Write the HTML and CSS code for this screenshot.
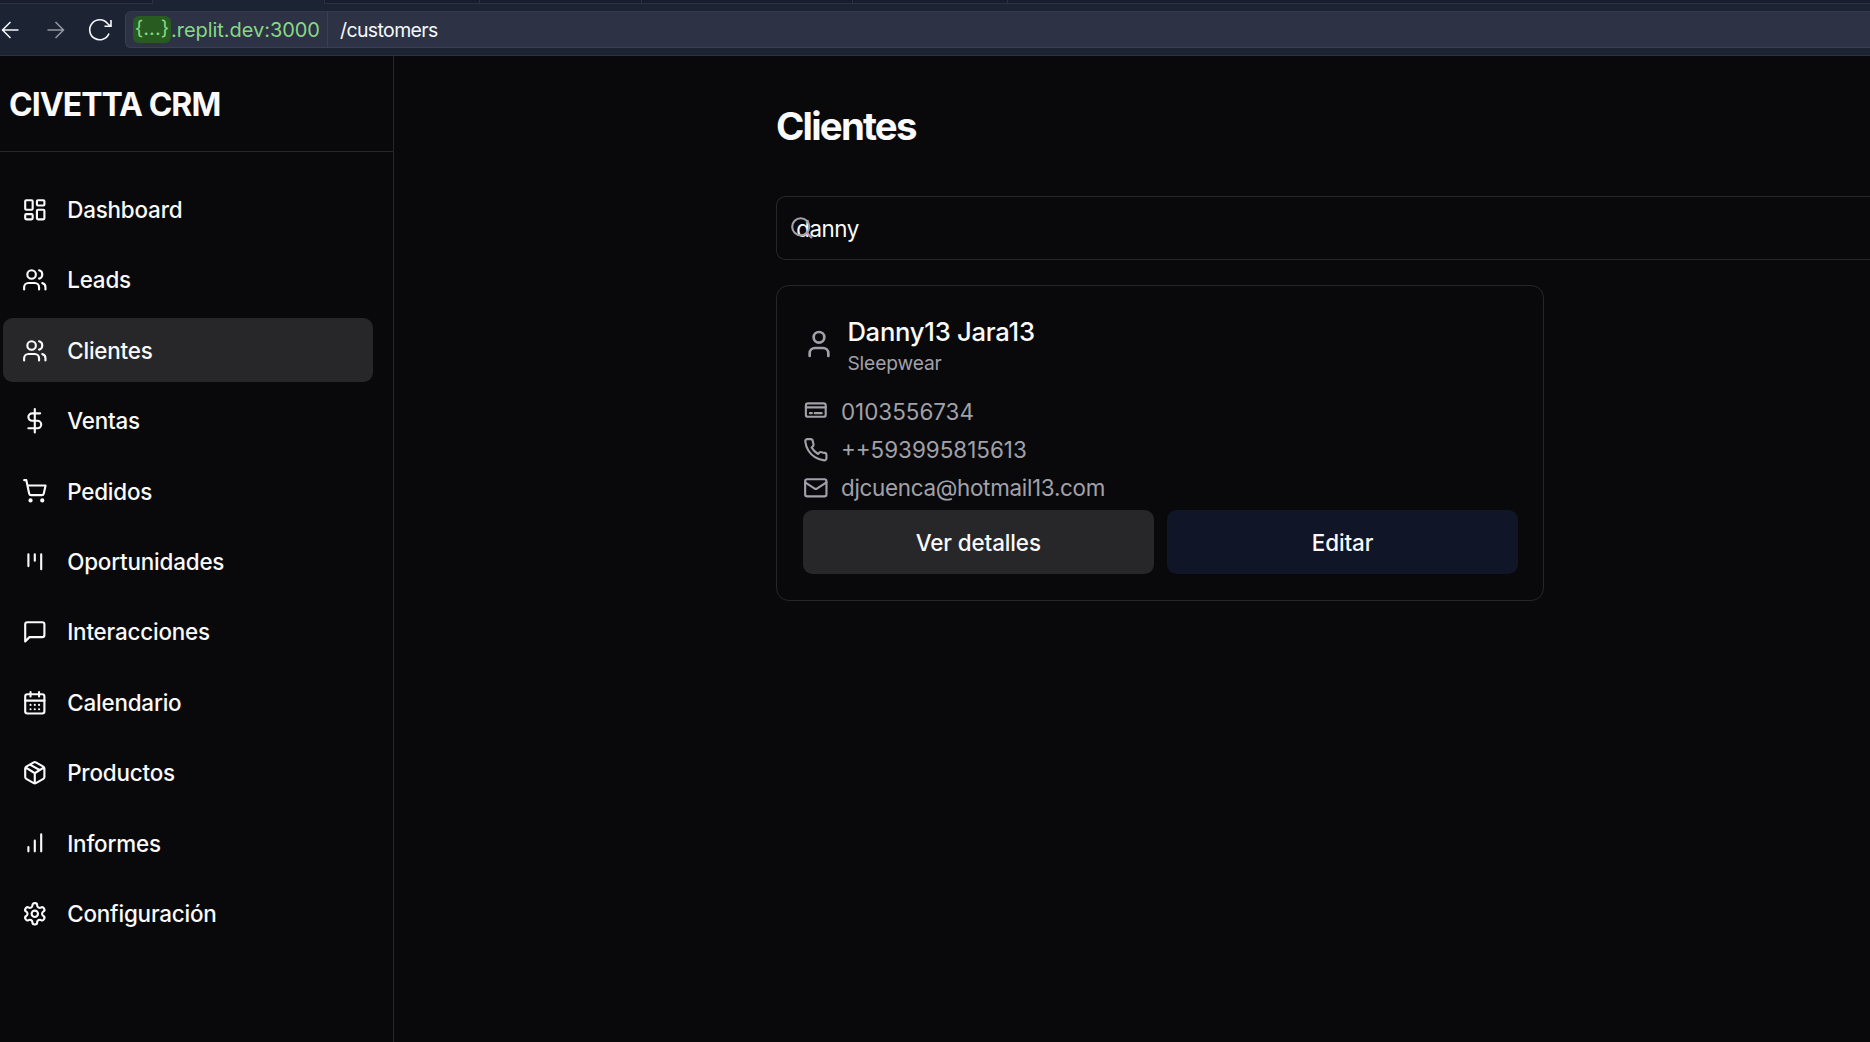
FILE: index.html
```html
<!DOCTYPE html>
<html lang="es">
<head>
<meta charset="utf-8">
<title>Civetta CRM</title>
<link rel="stylesheet" href="styles.css">
</head>
<body>
<div class="browser">
  <div class="tabs"><span class="tab t1"></span><span class="tab active"></span><span class="tab t3"></span><span class="tab t4"></span><span class="tab t5"></span><span class="tab t6"></span><span class="tab rest"></span></div>
  <div class="toolbar">
    <svg class="nav-arrow back" viewBox="0 0 18 18"><path d="M17.5 9H1.5M9.500 1 1.500 9l8 8"/></svg>
    <svg class="nav-arrow forward" viewBox="0 0 18 18"><path d="M.5 9h16M8.500 1l8 8-8 8"/></svg>
    <svg class="reload" viewBox="0 0 24 24"><path d="M21 15.500A10 10 0 1 1 19.500 5.500L22.300 8M23 2V8.300H16.500"/></svg>
    <div class="address">
      <div class="host"><span class="badge">{...}</span><span class="domain">.replit.dev:3000</span></div>
      <span class="path">/customers</span>
    </div>
  </div>
</div>
<div class="app">
  <aside class="sidebar">
    <div class="brand"><span class="brand-name">CIVETTA CRM</span></div>
    <nav class="menu">
      <a class="item"><svg class="icon" viewBox="0 0 24 24"><rect width="7" height="9" x="3" y="3" rx="1"/><rect width="7" height="5" x="14" y="3" rx="1"/><rect width="7" height="9" x="14" y="12" rx="1"/><rect width="7" height="5" x="3" y="16" rx="1"/></svg><span>Dashboard</span></a>
      <a class="item"><svg class="icon" viewBox="0 0 24 24"><path d="M16 21v-2a4 4 0 0 0-4-4H6a4 4 0 0 0-4 4v2"/><circle cx="9" cy="7" r="4"/><path d="M22 21v-2a4 4 0 0 0-3-3.870M16 3.130a4 4 0 0 1 0 7.750"/></svg><span>Leads</span></a>
      <a class="item current"><svg class="icon" viewBox="0 0 24 24"><path d="M16 21v-2a4 4 0 0 0-4-4H6a4 4 0 0 0-4 4v2"/><circle cx="9" cy="7" r="4"/><path d="M22 21v-2a4 4 0 0 0-3-3.870M16 3.130a4 4 0 0 1 0 7.750"/></svg><span>Clientes</span></a>
      <a class="item"><svg class="icon" viewBox="0 0 24 24"><path d="M12 1v22M17 5H9.500a3.500 3.500 0 0 0 0 7h5a3.500 3.500 0 0 1 0 7H6"/></svg><span>Ventas</span></a>
      <a class="item"><svg class="icon" viewBox="0 0 24 24"><circle cx="8" cy="21" r="1"/><circle cx="19" cy="21" r="1"/><path d="M2.050 2.050h2l2.660 12.420a2 2 0 0 0 2 1.580h9.780a2 2 0 0 0 1.950-1.570l1.650-7.430H5.120"/></svg><span>Pedidos</span></a>
      <a class="item"><svg class="icon" viewBox="0 0 24 24"><path d="M6 5v11M12 5v6M18 5v14"/></svg><span>Oportunidades</span></a>
      <a class="item"><svg class="icon" viewBox="0 0 24 24"><path d="M21 15a2 2 0 0 1-2 2H7l-4 4V5a2 2 0 0 1 2-2h14a2 2 0 0 1 2 2z"/></svg><span>Interacciones</span></a>
      <a class="item"><svg class="icon" viewBox="0 0 24 24"><rect width="18" height="18" x="3" y="4" rx="2"/><path d="M16 2v4M3 10h18M8 2v4M8 14h.010M12 14h.010M16 14h.010M8 18h.010M12 18h.010M16 18h.010"/></svg><span>Calendario</span></a>
      <a class="item"><svg class="icon" viewBox="0 0 24 24"><path d="M11 21.730a2 2 0 0 0 2 0l7-4A2 2 0 0 0 21 16V8a2 2 0 0 0-1-1.730l-7-4a2 2 0 0 0-2 0l-7 4A2 2 0 0 0 3 8v8a2 2 0 0 0 1 1.730zM12 22V12M3.300 7l7.703 4.734a2 2 0 0 0 1.994 0L20.700 7M7.500 4.270l9 5.150"/></svg><span>Productos</span></a>
      <a class="item"><svg class="icon" viewBox="0 0 24 24"><path d="M12 20V10M18 20V4M6 20v-4"/></svg><span>Informes</span></a>
      <a class="item"><svg class="icon" viewBox="0 0 24 24"><path d="M12.220 2h-.440a2 2 0 0 0-2 2v.180a2 2 0 0 1-1 1.730l-.430.250a2 2 0 0 1-2 0l-.150-.080a2 2 0 0 0-2.730.730l-.220.380a2 2 0 0 0 .730 2.730l.150.100a2 2 0 0 1 1 1.720v.510a2 2 0 0 1-1 1.740l-.150.090a2 2 0 0 0-.730 2.730l.220.380a2 2 0 0 0 2.730.730l.150-.080a2 2 0 0 1 2 0l.430.250a2 2 0 0 1 1 1.730V20a2 2 0 0 0 2 2h.440a2 2 0 0 0 2-2v-.180a2 2 0 0 1 1-1.730l.430-.250a2 2 0 0 1 2 0l.150.080a2 2 0 0 0 2.730-.730l.220-.390a2 2 0 0 0-.730-2.730l-.150-.080a2 2 0 0 1-1-1.740v-.500a2 2 0 0 1 1-1.740l.150-.090a2 2 0 0 0 .730-2.730l-.220-.380a2 2 0 0 0-2.730-.730l-.150.080a2 2 0 0 1-2 0l-.430-.250a2 2 0 0 1-1-1.730V4a2 2 0 0 0-2-2z"/><circle cx="12" cy="12" r="3"/></svg><span>Configuración</span></a>
    </nav>
  </aside>
  <main class="content">
    <h1 class="title">Clientes</h1>
    <div class="search">
      <svg class="icon search-icon" viewBox="0 0 24 24"><circle cx="11" cy="11" r="8"/><path d="m21 21-4.300-4.300"/></svg>
      <span class="query">danny</span>
    </div>
    <article class="card">
      <header class="customer">
        <svg class="icon avatar" viewBox="0 0 24 24"><path d="M19 21v-2a4 4 0 0 0-4-4H9a4 4 0 0 0-4 4v2"/><circle cx="12" cy="7" r="4"/></svg>
        <div class="who"><span class="name">Danny13 Jara13</span><span class="brand-tag">Sleepwear</span></div>
      </header>
      <div class="facts">
        <div class="fact id"><svg class="icon" viewBox="0 0 24 24"><rect width="18.600" height="12.600" x="2.700" y="5" rx="2"/><path d="M2.700 8.800h18.600M6.500 14.200h1.800M11 14.200h6.500"/></svg><span>0103556734</span></div>
        <div class="fact phone"><svg class="icon" viewBox="0 0 24 24"><path d="M22 16.920v3a2 2 0 0 1-2.180 2 19.790 19.790 0 0 1-8.630-3.070 19.500 19.500 0 0 1-6-6 19.790 19.790 0 0 1-3.070-8.670A2 2 0 0 1 4.110 2h3a2 2 0 0 1 2 1.720 12.840 12.840 0 0 0 .700 2.810 2 2 0 0 1-.450 2.110L8.090 9.910a16 16 0 0 0 6 6l1.270-1.270a2 2 0 0 1 2.110-.450 12.840 12.840 0 0 0 2.810.700A2 2 0 0 1 22 16.920z"/></svg><span>++593995815613</span></div>
        <div class="fact mail"><svg class="icon" viewBox="0 0 24 24"><rect width="20" height="16" x="2" y="4" rx="2"/><path d="m22 7-8.970 5.700a1.940 1.940 0 0 1-2.060 0L2 7"/></svg><span>djcuenca@hotmail13.com</span></div>
      </div>
      <div class="actions"><button class="button secondary">Ver detalles</button><button class="button primary">Editar</button></div>
    </article>
  </main>
</div>
</body>
</html>
```

FILE: styles.css
```css
* { box-sizing: border-box; }
html, body { height: 100%; }
body {
  margin: 0;
  overflow: hidden;
  display: flex;
  flex-direction: column;
  background: #09090b;
  color: #fafafa;
  font-family: Inter, "Liberation Sans", sans-serif;
  font-size: 22.4px;
}

/* Browser chrome */
.browser { flex: none; height: 56px; background: #1c2333; border-bottom: 1px solid #2b3245; }
.tabs { display: flex; height: 4px; }
.tab { background: #171d2b; border-right: 1px solid #2b3245; border-bottom: 1px solid #2b3245; }
.tab.active { width: 172px; background: #1c2333; border-bottom: 0; }
.t1 { width: 153px; }
.t3 { width: 155px; }
.t4 { width: 162px; }
.t5 { width: 211px; }
.t6 { width: 155px; }
.rest { flex: 1; border-right: 0; }
.toolbar { display: flex; align-items: center; height: 51px; }
.nav-arrow { flex: none; width: 18px; height: 18px; fill: none; stroke: #f5f9fc; stroke-width: 1.5; }
.back { margin-left: 1px; }
.forward { margin-left: 28px; opacity: .55; }
.reload { flex: none; width: 24px; height: 24px; margin-left: 23px; fill: none; stroke: #f5f9fc; stroke-width: 1.6; }
.address {
  flex: 1;
  display: flex;
  align-items: center;
  height: 37px;
  margin-left: 13px;
  background: #2e3245;
  border: 1px solid #3a3f54;
  border-top-color: #34384c;
  border-right: 0;
  border-radius: 6px 0 0 6px;
  font-size: 20px;
}
.host { display: flex; align-items: center; height: 100%; width: 202px; padding-left: 7px; border-right: 1px solid #3a3f54; color: #86d984; }
.badge { width: 38px; height: 27px; line-height: 25px; text-align: center; background: #285b20; border-radius: 6px; }
.domain { letter-spacing: -.040px; }
.path { margin-left: 12px; font-size: 19.500px; letter-spacing: -.620px; color: #f5f9fc; }

/* Layout */
.app { flex: 1; display: flex; min-height: 0; }
.sidebar { flex: none; width: 394px; border-right: 1px solid #27272a; }
.brand { display: flex; align-items: center; height: 96px; padding: 1px 0 0 9px; border-bottom: 1px solid #27272a; }
.brand-name { font-size: 32px; font-weight: 700; letter-spacing: -.960px; }

.icon { flex: none; width: 25.600px; height: 25.600px; fill: none; stroke: currentColor; stroke-width: 2; stroke-linecap: round; stroke-linejoin: round; }
.menu { display: flex; flex-direction: column; gap: 6.400px; padding: 25.600px 20px 0 3px; }
.item { display: flex; align-items: center; gap: 19.600px; height: 64px; padding-left: 19px; border-radius: 9.600px; font-weight: 500; letter-spacing: -.180px; }
.item.current { background: #27272a; }

.content { flex: 1; min-width: 0; padding: 44px 0 0 382px; }
.title { margin: 0; height: 52px; line-height: 53px; font-size: 38.400px; font-weight: 700; letter-spacing: -1.800px; }
.search { position: relative; display: flex; align-items: center; height: 64px; margin-top: 44px; padding-left: 19.200px; border: 1px solid #27272a; border-right: 0; border-radius: 9.600px 0 0 9.600px; }
.search-icon { position: absolute; left: 12px; top: 18px; color: #a1a1aa; }
.query { letter-spacing: -.450px; }

/* Customer card */
.card { width: 768px; height: 316px; margin-top: 25px; padding: 25.600px 24.800px 25.600px 25.600px; border: 1px solid #27272a; border-radius: 12.800px; }
.customer { display: flex; align-items: center; gap: 12.800px; height: 64px; }
.avatar { width: 32px; height: 32px; color: #a1a1aa; }
.who { display: flex; flex-direction: column; padding-top: 2px; }
.name { line-height: 38px; font-size: 25.600px; font-weight: 500; letter-spacing: -.250px; }
.brand-tag { line-height: 25px; font-size: 19.200px; letter-spacing: -.130px; color: #a1a1aa; }
.facts { display: flex; flex-direction: column; gap: 6.400px; margin-top: 19.600px; color: #a1a1aa; }
.fact { display: flex; align-items: center; gap: 12.800px; height: 32px; }
.mail { letter-spacing: -.290px; }
.actions { display: flex; gap: 12.800px; margin-top: 6.400px; }
.button { flex: 1; height: 64px; padding: 0; border: 0; border-radius: 9.600px; color: #fafafa; font: 500 22.400px Inter, "Liberation Sans", sans-serif; letter-spacing: -.100px; }
.secondary { background: #27272a; }
.primary { background: #101527; }
```
